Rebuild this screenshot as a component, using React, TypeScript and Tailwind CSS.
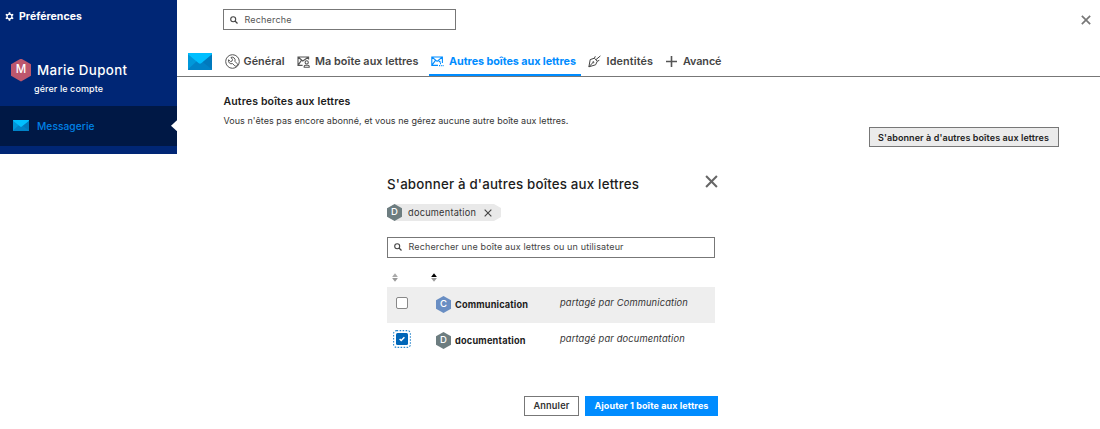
import type { ReactNode } from "react";

function Hexagon({ letter, className }: { letter: string; className: string }) {
  return (
    <span
      className={`flex shrink-0 items-center justify-center font-medium [clip-path:polygon(50%_0,100%_25%,100%_75%,50%_100%,0_75%,0_25%)] ${className}`}
    >
      {letter}
    </span>
  );
}

function Envelope({ className }: { className: string }) {
  return (
    <svg viewBox="0 0 24 16" preserveAspectRatio="none" className={className}>
      <rect width="24" height="16" rx="0.6" fill="#0098da" />
      <path d="M0 15.4 9.5 7h5L24 15.4a.6.6 0 0 1-.6.6H.6a.6.6 0 0 1-.6-.6Z" fill="#0083c8" />
      <path d="M24 1v14.6L14 8Z" fill="#0079bd" />
      <path d="M0 .6A.6.6 0 0 1 .6 0h22.8a.6.6 0 0 1 .6.6V1.2L13.2 9.6a2 2 0 0 1-2.4 0L0 1.2Z" fill="#00bfff" />
    </svg>
  );
}

function Cross({ className }: { className: string }) {
  return (
    <svg viewBox="0 0 12 12" fill="none" stroke="currentColor" className={className}>
      <path d="m1 1 10 10M11 1 1 11" />
    </svg>
  );
}

function Search() {
  return (
    <svg viewBox="0 0 8 8" fill="none" stroke="#444" className="size-2 shrink-0">
      <circle cx="3.2" cy="3.2" r="2.5" strokeWidth="1.1" />
      <path d="m5 5 2.5 2.5" strokeWidth="1.3" />
    </svg>
  );
}

function Gear() {
  return (
    <svg viewBox="0 0 10 10" fill="none" stroke="#fff" className="size-[9px] shrink-0">
      <circle cx="5" cy="5" r="2.7" strokeWidth="1.4" />
      <path
        d="M5 .3v1.9M5 7.8v1.9M.9 2.65l1.7 1M7.4 6.35l1.7 1M.9 7.35l1.7-1M7.4 3.65l1.7-1"
        strokeWidth="1.9"
      />
    </svg>
  );
}

function WrenchIcon() {
  return (
    <svg viewBox="0 0 15 15" fill="none" stroke="#555" className="size-[15px] shrink-0">
      <circle cx="7.5" cy="7.5" r="6.8" strokeWidth="1" />
      <path
        d="M6 3.4a3 3 0 0 1 3.9 3.9l2.2 2.3a1.5 1.5 0 0 1-2.3 2.2L7.5 9.6A3 3 0 0 1 3.6 5.8l1.9 1.8 1.5-.5.5-1.6Z"
        strokeWidth="1"
        strokeLinejoin="round"
      />
    </svg>
  );
}

function MailUserIcon() {
  return (
    <svg viewBox="0 0 14 12" fill="none" stroke="#555" strokeWidth="1.1" className="h-3 w-3.5 shrink-0">
      <path d="M5.6 9.4H1V1h10.6v2.6M1 1l4.8 4 5.8-4M1 9.4l3.4-5" />
      <circle cx="9.7" cy="6.4" r="1.6" />
      <path d="M7.2 11.3v-1q0-1.1 1.3-1.1h2.4q1.3 0 1.3 1.1v1Z" />
    </svg>
  );
}

function MailOtherIcon() {
  return (
    <svg viewBox="0 0 13 11" fill="none" stroke="#008cff" strokeWidth="1.1" className="h-[11px] w-[13px] shrink-0">
      <path d="M7 9.4H.8V1h10.6v6M.8 1l5.3 4.4L11.4 1M.8 9.4l3.7-5M7.6 4.5l2 2" />
      <path d="M8 9.6h1M9.8 9.6h1M11.6 9.6h1M9 7.6h1" strokeWidth="1.3" />
    </svg>
  );
}

function PenIcon() {
  return (
    <svg viewBox="0 0 13 13" fill="none" stroke="#444" strokeWidth="1" className="size-[13px] shrink-0">
      <path d="M.9 11.8 2.2 4.6l4.2-1.4 2.9 3-1.7 3.6Z" strokeLinejoin="round" />
      <path d="m.9 11.8 4-4.2M6.4 3.2l.9-1.9M9.3 6.2l2-.9M7.9 4.7 12.4.9" />
      <circle cx="5.3" cy="7.2" r=".6" />
    </svg>
  );
}

function Tab({ icon, children, className }: { icon: ReactNode; children: ReactNode; className: string }) {
  return (
    <div className={`flex h-[31px] items-center text-[10.8px] ${className}`}>
      {icon}
      <span className="pt-px">{children}</span>
    </div>
  );
}

function Sorter({ up }: { up: string }) {
  return (
    <svg viewBox="0 0 6 9" className="h-[9px] w-1.5 shrink-0">
      <path d="M3 .2 5.9 4H.1Z" className={up} />
      <path d="M3 8.8 5.9 5H.1Z" fill="#999" />
    </svg>
  );
}

export default function App() {
  return (
    <div className="h-[429px] w-[1100px] overflow-hidden bg-white font-['Inter','Liberation_Sans',sans-serif] whitespace-nowrap text-[#333]">
      <div className="flex">
        <aside className="flex h-[153.5px] w-[177px] shrink-0 flex-col bg-[#002675] text-white">
          <div className="flex h-[33px] items-center gap-[5px] pl-[5px] text-[10.5px] font-bold tracking-[0.04px]">
            <Gear />
            <span className="pt-px">Préférences</span>
          </div>
          <div className="mt-[25px] flex h-6 items-center pl-[11px]">
            <Hexagon letter="M" className="h-[23px] w-5 bg-[#bd576d] text-[11.5px]" />
            <span className="ml-1.5 pt-[1.5px] text-[13.3px] font-[450] tracking-[0.36px]">Marie Dupont</span>
          </div>
          <div className="h-6 pl-[34px] text-[9px] leading-[13px] font-medium tracking-[0.09px]">gérer le compte</div>
          <div className="flex h-[39.5px] items-center bg-[#001845] pl-[13px] text-[10.2px] font-medium tracking-[0.06px] text-[#0082e5]">
            <Envelope className="h-[11px] w-4" />
            <span className="ml-2 grow pt-[1.5px]">Messagerie</span>
            <span className="h-[11px] w-[6px] bg-white [clip-path:polygon(100%_0,100%_100%,0_50%)]" />
          </div>
        </aside>

        <main className="flex grow flex-col">
          <div className="flex h-[46px] justify-between pt-[9px] pl-[46px]">
            <div className="flex h-[21px] w-[233px] items-center gap-[6.5px] border border-[#777] pl-1.5 text-[9px] tracking-[0.18px] text-[#555]">
              <Search />
              Recherche
            </div>
            <Cross className="mt-1.5 mr-[9px] size-[10px] text-[#777] [stroke-width:2]" />
          </div>
          <div className="flex h-[31px] items-center border-b border-[#777] font-semibold text-[#444]">
            <Envelope className="ml-[11px] h-[17px] w-6" />
            <Tab icon={<WrenchIcon />} className="ml-[13px] w-[72px] gap-[3.5px] pt-px tracking-[0.05px]">
              Général
            </Tab>
            <Tab icon={<MailUserIcon />} className="w-[132px] gap-1 pt-px tracking-[0.06px]">
              Ma boîte aux lettres
            </Tab>
            <Tab
              icon={<MailOtherIcon />}
              className="mb-px w-[152px] gap-[5px] border-b-2 border-[#008cff] pt-[4px] pl-0.5 font-bold tracking-[-0.06px] text-[#008cff]"
            >
              Autres boîtes aux lettres
            </Tab>
            <Tab icon={<PenIcon />} className="ml-[7px] w-[78px] gap-[5.5px] pt-px tracking-[0.14px]">
              Identités
            </Tab>
            <Tab
              icon={
                <svg viewBox="0 0 11 11" stroke="#555" strokeWidth="1.6" className="size-[11px]">
                  <path d="M5.5 0v11M0 5.5h11" />
                </svg>
              }
              className="gap-1.5 pt-px tracking-[-0.07px]"
            >
              Avancé
            </Tab>
          </div>
          <div className="flex justify-between pr-[41.5px] pl-[46.5px]">
            <div>
              <h1 className="mt-[17px] text-[10.5px] leading-4 font-semibold tracking-[0.15px] text-[#1c1c1c]">
                Autres boîtes aux lettres
              </h1>
              <p className="mt-1 text-[9px] leading-[13px] tracking-[0.045px]">
                Vous n'êtes pas encore abonné, et vous ne gérez aucune autre boîte aux lettres.
              </p>
            </div>
            <button className="mt-[50px] h-[20px] w-[190px] border border-[#777] bg-[#ebebeb] text-[9px] leading-none font-semibold tracking-[0.09px] text-[#222]">
              S'abonner à d'autres boîtes aux lettres
            </button>
          </div>
        </main>
      </div>

      <section className="ml-[387px] flex w-[331px] flex-col">
        <div className="mt-[19px] flex h-6 items-start justify-between">
          <h2 className="text-[13.3px] leading-[22px] font-medium tracking-[0.19px] text-[#1c1c1c]">
            S'abonner à d'autres boîtes aux lettres
          </h2>
          <Cross className="mt-[2px] size-[13px] text-[#666] [stroke-width:1.9]" />
        </div>
        <div className="mt-[7px] flex h-[18px] w-[114px] items-center">
          <div className="flex h-[17px] w-full items-center bg-[#e9e9e9] text-[9.2px] tracking-[0.25px] [clip-path:polygon(7px_0,107px_0,100%_4px,100%_13px,107px_100%,7px_100%,0_13px,0_4px)]">
            <Hexagon letter="D" className="h-[17px] w-[15px] bg-[#6d7d80] text-[9.5px] text-white" />
            <span className="ml-1.5">documentation</span>
            <Cross className="ml-[8px] size-2 text-[#444] [stroke-width:1.7]" />
          </div>
        </div>
        <div className="mt-[15px] flex h-[21px] w-[328px] items-center gap-[6.5px] border border-[#777] pl-1.5 text-[9px] tracking-[0.14px] text-[#444]">
          <Search />
          Rechercher une boîte aux lettres ou un utilisateur
        </div>
        <div className="flex h-[29px] items-end gap-[33px] pb-[5px] pl-[5px]">
          <Sorter up="fill-[#aaa]" />
          <Sorter up="fill-black" />
        </div>
        <div className="flex h-9 w-[328px] items-center bg-[#eee] pl-[9px]">
          <span className="mb-1 size-[12px] rounded-[2px] border border-[#888] bg-white" />
          <Hexagon letter="C" className="ml-[28px] h-[17px] w-[15px] bg-[#698ec3] text-[9.5px] text-white" />
          <span className="ml-1 w-[105px] text-[9.2px] font-bold tracking-[0.15px] text-[#1c1c1c]">
            Communication
          </span>
          <span className="mb-1 text-[9.3px] tracking-[0.15px] italic">partagé par Communication</span>
        </div>
        <div className="flex h-9 w-[328px] items-center pl-[6px]">
          <span className="mb-1 flex size-[18px] items-center justify-center">
            <svg viewBox="0 0 18 18" className="size-[18px]" fill="none">
              <rect x=".6" y=".6" width="16.8" height="16.8" rx="3" stroke="#2a87cc" strokeWidth="1.1" strokeDasharray="1.6 1.4" />
              <rect x="3" y="3" width="12" height="12" rx="1.5" fill="#0066b8" />
              <path d="m6.6 9 1.6 1.5 3.2-3.2" stroke="#fff" strokeWidth="1.5" />
            </svg>
          </span>
          <Hexagon letter="D" className="ml-[25px] h-[17px] w-[15px] bg-[#6d7d80] text-[9.5px] text-white" />
          <span className="ml-1 w-[105px] text-[9.2px] font-bold tracking-[0.2px] text-[#1c1c1c]">
            documentation
          </span>
          <span className="mb-1 text-[9.3px] tracking-[0.15px] italic">partagé par documentation</span>
        </div>
        <div className="mt-[37px] flex h-5 justify-end gap-[6px] text-[9.2px] leading-none">
          <button className="w-[55px] border border-[#777] bg-white font-semibold tracking-[0.16px] text-[#333]">
            Annuler
          </button>
          <button className="w-[133px] bg-[#008cff] text-[9px] font-bold tracking-[0.11px] text-white">
            Ajouter 1 boîte aux lettres
          </button>
        </div>
      </section>
    </div>
  );
}
